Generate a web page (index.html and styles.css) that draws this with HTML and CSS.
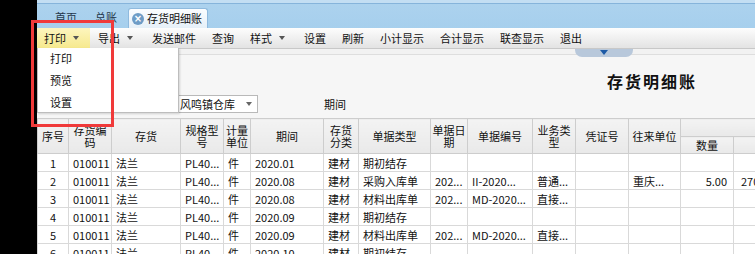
FILE: index.html
```html
<!DOCTYPE html>
<html lang="zh">
<head>
<meta charset="utf-8">
<title>存货明细账</title>
<link rel="stylesheet" href="styles.css">
</head>
<body>
<div class="screen">
  <div class="side"></div>
  <div class="app">
    <div class="tabbar">
      <span class="tab">首页</span>
      <span class="tab">总账</span>
      <span class="tab active"><span class="close">×</span>存货明细账</span>
    </div>
    <div class="toolbar">
      <span class="tb-item drop hot">打印<i class="caret"></i></span>
      <span class="tb-item drop">导出<i class="caret"></i></span>
      <span class="tb-item">发送邮件</span>
      <span class="tb-item">查询</span>
      <span class="tb-item drop">样式<i class="caret"></i></span>
      <span class="tb-item">设置</span>
      <span class="tb-item">刷新</span>
      <span class="tb-item">小计显示</span>
      <span class="tb-item">合计显示</span>
      <span class="tb-item">联查显示</span>
      <span class="tb-item">退出</span>
    </div>
    <div class="content">
      <div class="strip"><span class="handle"><i class="handle-arrow"></i></span></div>
      <div class="title-row"><h1 class="title">存货明细账</h1></div>
      <div class="filter-row">
        <div class="combo"><span class="combo-text">风鸣镇仓库</span><i class="caret"></i></div>
        <span class="label">期间</span>
      </div>
      <table class="grid">
        <colgroup>
          <col class="c31"><col class="c43"><col class="c69"><col class="c43"><col class="c27">
          <col class="c73"><col class="c35"><col class="c72"><col class="c37"><col class="c65">
          <col class="c43"><col class="c53"><col class="c52"><col class="c53"><col class="c90">
        </colgroup>
        <thead>
          <tr class="h1row">
            <th rowspan="2">序号</th>
            <th rowspan="2">存货编<br>码</th>
            <th rowspan="2">存货</th>
            <th rowspan="2">规格型<br>号</th>
            <th rowspan="2">计量<br>单位</th>
            <th rowspan="2">期间</th>
            <th rowspan="2">存货<br>分类</th>
            <th rowspan="2">单据类型</th>
            <th rowspan="2">单据日<br>期</th>
            <th rowspan="2">单据编号</th>
            <th rowspan="2">业务类<br>型</th>
            <th rowspan="2">凭证号</th>
            <th rowspan="2">往来单位</th>
            <th colspan="2" class="group"></th>
          </tr>
          <tr class="h2row">
            <th>数量</th>
            <th>单价</th>
          </tr>
        </thead>
        <tbody>
          <tr><td class="ctr">1</td><td>010011</td><td>法兰</td><td>PL40...</td><td>件</td><td>2020.01</td><td>建材</td><td>期初结存</td><td></td><td></td><td></td><td></td><td></td><td></td><td></td></tr>
          <tr><td class="ctr">2</td><td>010011</td><td>法兰</td><td>PL40...</td><td>件</td><td>2020.08</td><td>建材</td><td>采购入库单</td><td>202...</td><td>II-2020...</td><td>普通...</td><td></td><td>重庆...</td><td class="num">5.00</td><td class="far">270.00</td></tr>
          <tr><td class="ctr">3</td><td>010011</td><td>法兰</td><td>PL40...</td><td>件</td><td>2020.08</td><td>建材</td><td>材料出库单</td><td>202...</td><td>MD-2020...</td><td>直接...</td><td></td><td></td><td></td><td></td></tr>
          <tr><td class="ctr">4</td><td>010011</td><td>法兰</td><td>PL40...</td><td>件</td><td>2020.09</td><td>建材</td><td>期初结存</td><td></td><td></td><td></td><td></td><td></td><td></td><td></td></tr>
          <tr><td class="ctr">5</td><td>010011</td><td>法兰</td><td>PL40...</td><td>件</td><td>2020.09</td><td>建材</td><td>材料出库单</td><td>202...</td><td>MD-2020...</td><td>直接...</td><td></td><td></td><td></td><td></td></tr>
          <tr><td class="ctr">6</td><td>010011</td><td>法兰</td><td>PL40...</td><td>件</td><td>2020.10</td><td>建材</td><td>期初结存</td><td></td><td></td><td></td><td></td><td></td><td></td><td></td></tr>
        </tbody>
      </table>
    </div>
    <div class="menu">
      <div class="menu-item">打印</div>
      <div class="menu-item">预览</div>
      <div class="menu-item">设置</div>
    </div>
    <div class="mark-box"></div>
  </div>
</div>
</body>
</html>
```

FILE: styles.css
```css
* { box-sizing: border-box; }
html, body {
  margin: 0;
  padding: 0;
  background: #000;
  width: 755px;
  height: 254px;
  overflow: hidden;
  font-family: "SimSun", "Noto Sans CJK SC", sans-serif;
  font-size: 11px;
  color: #111;
}
.screen { display: flex; height: 254px; }
.side { width: 37px; flex: none; background: #000; }
.app {
  position: relative;
  flex: 1;
  min-width: 0;
  background: #f5f5f5;
}

/* tabs */
.tabbar {
  height: 28px;
  display: flex;
  align-items: flex-end;
  background: linear-gradient(#c3def3 0, #c3def3 3px, #86b4db 3px, #86b4db 4px, #acd2ee 4px, #a6cfed 100%);
  padding-left: 9px;
}
.tab {
  height: 20px;
  line-height: 19px;
  padding: 0 9px;
  color: #25384c;
  white-space: nowrap;
}
.tab.active {
  margin-left: 2px;
  padding: 0 5px 0 3px;
  display: flex;
  align-items: center;
  background: linear-gradient(#fbfdff, #e6f0f8);
  border: 1px solid #8fbade;
  border-bottom: none;
  border-radius: 3px 3px 0 0;
  color: #111;
}
.close {
  width: 12px;
  height: 12px;
  border-radius: 50%;
  background: #6e9cc6;
  color: #fff;
  font-family: "DejaVu Sans", sans-serif;
  font-size: 10px;
  line-height: 12px;
  text-align: center;
  margin-right: 3px;
  font-weight: bold;
}

/* toolbar */
.toolbar {
  height: 20px;
  display: flex;
  align-items: stretch;
  background: linear-gradient(#fdfdfd, #e3e3e3);
}
.tb-item {
  display: flex;
  align-items: center;
  padding: 0 8px;
  white-space: nowrap;
  color: #111;
}
.tb-item.drop { padding-right: 11px; }
.tb-item.hot {
  padding-left: 7px;
  background: linear-gradient(#fdf5be, #f6e98e);
}
.caret {
  display: inline-block;
  width: 0;
  height: 0;
  border-left: 3px solid transparent;
  border-right: 3px solid transparent;
  border-top: 4px solid #555;
  margin-left: 7px;
}

/* content */
.content {
  overflow: hidden;
  background: #f6f6f6;
}
.strip {
  position: relative;
  height: 7px;
  border-top: 1px solid #c8c8c8;
  border-bottom: 1px solid #dedede;
  background: #f2f2f2;
}
.handle {
  position: absolute;
  left: 538px;
  top: 0;
  width: 58px;
  height: 8px;
  background: #b8c8db;
  border-radius: 0 0 7px 7px;
  display: flex;
  justify-content: center;
}
.handle-arrow {
  width: 0;
  height: 0;
  border-left: 4px solid transparent;
  border-right: 4px solid transparent;
  border-top: 5px solid #1d5aa6;
  margin-top: 1px;
}
.title-row {
  display: flex;
  justify-content: flex-end;
  padding: 16px 58px 3px 0;
}
.title {
  margin: 0;
  font-size: 16px;
  line-height: 20px;
  font-weight: bold;
  letter-spacing: 2px;
  color: #111;
}
.filter-row {
  height: 24px;
  display: flex;
  align-items: flex-start;
  padding-left: 138px;
}
.combo {
  margin-top: 1px;
  width: 83px;
  height: 18px;
  border: 1px solid #b9b9b9;
  background: #fff;
  display: flex;
  align-items: center;
  justify-content: space-between;
  padding: 0 5px 0 4px;
}
.combo .caret { border-top-color: #666; margin-left: 0; }
.label {
  margin-left: 66px;
  line-height: 17px;
  margin-top: 2px;
}

/* grid */
.grid {
  border-collapse: collapse;
  table-layout: fixed;
  width: 786px;
}
.c31 { width: 31px; } .c43 { width: 43px; } .c69 { width: 69px; }
.c27 { width: 27px; } .c73 { width: 73px; } .c35 { width: 35px; }
.c72 { width: 72px; } .c37 { width: 37px; } .c65 { width: 65px; }
.c53 { width: 53px; } .c52 { width: 52px; } .c90 { width: 90px; }
.grid th {
  background: linear-gradient(#f3f3f3, #e9e9e9);
  border: 1px solid #cdcdcd;
  font-weight: normal;
  line-height: 12px;
  padding: 0;
  text-align: center;
  vertical-align: middle;
  color: #111;
  white-space: nowrap;
  overflow: hidden;
}
.h1row { height: 18px; }
.h2row { height: 17px; }
.grid td {
  background: #fff;
  border: 1px solid #d9d9d9;
  height: 18px;
  padding: 0 4px;
  line-height: 16px;
  white-space: nowrap;
  overflow: hidden;
  color: #111;
}
.grid td.ctr { text-align: center; }
.grid td.num { text-align: right; padding-right: 6px; }
.grid td.far { padding-left: 7px; }

/* dropdown menu */
.menu {
  position: absolute;
  left: 0;
  top: 48px;
  width: 142px;
  height: 65px;
  background: #fff;
  border: 1px solid #bdbdbd;
  border-top: none;
  box-shadow: 1px 1px 2px rgba(0,0,0,0.15);
}
.menu-item {
  height: 22px;
  line-height: 21px;
  padding-left: 12px;
  color: #111;
}

/* annotation box */
.mark-box {
  position: absolute;
  left: -6px;
  top: 20px;
  width: 83px;
  height: 107px;
  border: 3px solid #f03a3a;
}
```
